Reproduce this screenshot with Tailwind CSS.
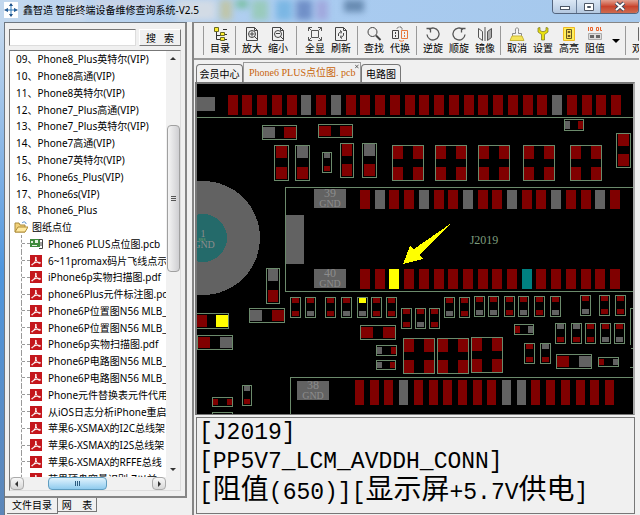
<!DOCTYPE html>
<html lang="zh-CN">
<head>
  <meta charset="UTF-8">
  <meta name="viewport" content="width=device-width, initial-scale=1.0">
  <title>鑫智造 智能终端设备维修查询系统-V2.5</title>
  <script src="https://cdn.jsdelivr.net/npm/@tailwindcss/browser@4"></script>
</head>
<body class="h-screen overflow-hidden flex flex-col bg-[#f0f0f0] text-black text-[10px] font-['Noto_Sans','Noto_Sans_CJK_SC',sans-serif]">

  <!-- Title bar -->
  <header class="relative h-[22px] shrink-0 flex items-start overflow-hidden bg-gradient-to-r from-[#c3d8ee] via-[#a9cbf0] to-[#a5c8ec]">
    <div class="absolute inset-0 flex items-start pl-[68px] blur-[3px] opacity-60">
      <span class="w-4 h-5 mr-3 bg-[#dfe3ea]"></span>
      <span class="w-16 h-2 mr-4 bg-[#d9d3df]"></span>
      <span class="w-10 h-5 mr-1 bg-[#e8e3df]"></span>
      <span class="w-3 h-5 mr-1 bg-[#c9c07c]"></span>
      <span class="w-3 h-2 mr-1 bg-[#58b870]"></span>
      <span class="w-4 h-5 mr-2 bg-[#8cc99a]"></span>
      <span class="w-4 h-5 mr-1 bg-[#5ba9dc]"></span>
      <span class="w-4 h-5 mr-1 bg-[#4a68ae]"></span>
      <span class="w-3 h-5 mr-4 bg-[#9c92d2]"></span>
      <span class="w-5 h-3 bg-[#3c6088]"></span>
    </div>
    <div class="relative flex items-center gap-[5px] pl-1 pt-[2px]">
      <svg class="w-[14px] h-4" viewBox="0 0 14 16">
        <rect width="14" height="16" fill="#fff"/>
        <path d="M7 1l2 3H5zM7 15l2-3H5zM0 8l4-2v4zM14 8l-4-2v4z" fill="#17477f"/>
        <path d="M7 3v10M2 8h10" stroke="#2f79b9"/>
      </svg>
      <h1 class="text-[10px] leading-4 whitespace-nowrap">鑫智造 智能终端设备维修查询系统-V2.5</h1>
    </div>
    <div class="relative ml-auto mr-px flex h-[14px] rounded-b border border-t-0 border-[#54657e] overflow-hidden">
      <button aria-label="最小化" class="w-6 flex justify-center items-center border-r border-[#6b7f9b] bg-gradient-to-b from-[#dbe7f5] to-[#b4c8e0]">
        <svg class="w-3 h-3" viewBox="0 0 12 12"><rect x="1.500" y="5.500" width="9" height="3" fill="#fff" stroke="#4d5665"/></svg>
      </button>
      <button aria-label="最大化" class="w-6 flex justify-center items-center border-r border-[#6b7f9b] bg-gradient-to-b from-[#dbe7f5] to-[#b4c8e0]">
        <svg class="w-3 h-3" viewBox="0 0 12 12"><path d="M1.500 2.500h9v7h-9zM4.500 5.500h3v1h-3z" fill="#fff" stroke="#4d5665"/></svg>
      </button>
      <button aria-label="关闭" class="w-[37px] flex justify-center items-center bg-gradient-to-b from-[#e0a090] via-[#c8432c] to-[#cd6a50]">
        <svg class="w-3 h-3" viewBox="0 0 12 12"><path d="M2 2l8 7M10 2L2 9" stroke="#444b5c" stroke-width="4"/><path d="M2 2l8 7M10 2L2 9" stroke="#fff" stroke-width="2"/></svg>
      </button>
    </div>
  </header>

  <main class="flex-1 min-h-0 flex">
    <div class="w-1 shrink-0 bg-gradient-to-b from-[#c5d9ee] via-[#4f96dd] to-[#5c86b8]"></div>

    <!-- Left panel: file tree -->
    <aside class="w-[183px] shrink-0 flex flex-col border-l border-t border-[#6e7780]">
      <div class="flex-1 min-h-0 flex flex-col gap-1 pl-1 pr-1 pt-[6px] pb-[5px] border-r-2 border-b-2 border-[#868686]">
        <form class="flex gap-[3px]">
          <input type="text" aria-label="搜索" class="flex-1 min-w-0 h-[17px] bg-white border border-[#777] border-r-[#ddd] border-b-[#ddd] px-1 outline-none">
          <button type="button" class="w-[42px] h-[17px] bg-[#f0f0f0] border border-white border-r-[#777] border-b-[#777] text-[10px] leading-[14px] whitespace-pre">搜   索</button>
        </form>

        <div class="flex-1 min-h-0 flex flex-col bg-white border border-[#777] border-r-[#ddd] border-b-[#ddd]">
          <div class="flex-1 min-h-0 flex">
            <div class="flex-1 min-w-0 overflow-hidden">
              <ul id="tree" class="h-[436px] grid auto-rows-fr whitespace-nowrap leading-4"></ul>
            </div>
            <div class="w-[14px] flex flex-col items-center bg-[#f1f1f1]">
              <svg class="w-2 h-4 mt-px" viewBox="0 0 8 16"><path d="M1 8l3-3 3 3z" fill="#333"/></svg>
              <div class="mt-[57px] h-[147px] w-[13px] flex flex-col justify-center items-center gap-px rounded-sm border border-[#a0a0a0] bg-gradient-to-r from-[#f4f4f4] to-[#cfcfd2]">
                <i class="w-[5px] h-px bg-[#555]"></i>
                <i class="w-[5px] h-px bg-[#555]"></i>
                <i class="w-[5px] h-px bg-[#555]"></i>
              </div>
              <svg class="w-2 h-4 mt-auto" viewBox="0 0 8 16"><path d="M1 7l3 3 3-3z" fill="#333"/></svg>
            </div>
          </div>
          <div class="h-[13px] shrink-0 flex bg-[#f1f1f1] pr-[14px]">
            <button aria-label="向左" class="w-[14px] flex justify-center items-center rounded-sm border border-[#aaa] bg-gradient-to-b from-[#f8f8f8] to-[#d8d8d8]">
              <svg class="w-2 h-2" viewBox="0 0 8 8"><path d="M5 1v6L2 4z" fill="#333"/></svg>
            </button>
            <div class="ml-6 w-[59px] flex justify-center items-center gap-px rounded-sm border border-[#5f9dc0] bg-gradient-to-b from-[#e0f3fd] to-[#8fcbee]">
              <i class="w-px h-[5px] bg-[#2d5c80]"></i>
              <i class="w-px h-[5px] bg-[#2d5c80]"></i>
              <i class="w-px h-[5px] bg-[#2d5c80]"></i>
            </div>
            <button aria-label="向右" class="ml-auto w-[14px] flex justify-center items-center rounded-sm border border-[#aaa] bg-gradient-to-b from-[#f8f8f8] to-[#d8d8d8]">
              <svg class="w-2 h-2" viewBox="0 0 8 8"><path d="M3 1v6l3-3z" fill="#333"/></svg>
            </button>
          </div>
        </div>
      </div>
      <nav class="h-[17px] shrink-0 flex items-start pl-[2px]">
        <button class="h-4 w-[51px] border-r border-b border-[#777]">文件目录</button>
        <button class="h-[14px] w-[39px] border-r border-b border-[#777] leading-3 whitespace-pre">网    表</button>
      </nav>
    </aside>

    <!-- Right panel -->
    <section class="flex-1 min-w-0 ml-[5px] mr-px flex flex-col border-l-2 border-t border-[#868686]">
      <div class="h-[37px] shrink-0 flex items-center overflow-hidden pl-[9px] border-b-2 border-[#999] leading-3 whitespace-nowrap">
        <div class="h-[29px] shrink-0 flex border-l border-[#999] pl-[3px] pr-[2px]">
          <button class="w-[26px] flex flex-col items-center">
            <svg class="size-4" viewBox="0 0 16 16" fill="none"><path d="M4.500 5v8.500M4.500 9.500h5M4.500 13.500h5M11 3.500h4M11 8.500h4M11 13.500h4" stroke="#333"/><path d="M2.500 1.500h4v4h-4zM8.500 6.500h4v3h-4zM8.500 11.500h4v3h-4z" fill="#ffee30" stroke="#6a6a20"/></svg>
            <span>目录</span>
          </button>
        </div>
        <div class="h-[29px] shrink-0 flex border-l border-[#999] pl-[3px] pr-[5px]">
          <button class="w-[26px] flex flex-col items-center">
            <svg class="size-4" viewBox="0 0 16 16" fill="none" stroke="#444"><path d="M2.500 1.500h8l3 3v10h-11zM10.500 1.500v3h3M10 10l3 3M5.500 8h5M8 5.500v5"/><circle cx="8" cy="8" r="3.500"/></svg>
            <span>放大</span>
          </button>
          <button class="w-[26px] flex flex-col items-center">
            <svg class="size-4" viewBox="0 0 16 16" fill="none" stroke="#444"><path d="M2.500 1.500h8l3 3v10h-11zM10.500 1.500v3h3M10 10l3 3M6 7.500h4"/><circle cx="8" cy="8" r="3.500"/></svg>
            <span>缩小</span>
          </button>
        </div>
        <div class="h-[29px] shrink-0 flex border-l border-[#999] pl-[5px] pr-[3px]">
          <button class="w-[26px] flex flex-col items-center">
            <svg class="size-4" viewBox="0 0 16 16" fill="none" stroke="#555"><path d="M4.500 4.500h7v7h-7zM1.500 5V1.500H5M11 1.500h3.500V5M14.500 11v3.500H11M5 14.500H1.500V11M2 2l2 2M14 2l-2 2M14 14l-2-2M2 14l2-2"/></svg>
            <span>全显</span>
          </button>
          <button class="w-[26px] flex flex-col items-center">
            <svg class="size-4" viewBox="0 0 16 16" fill="none" stroke="#444"><path d="M2.500 1.500h8l3 3v10h-11zM10.500 1.500v3h3M5.500 10V7.500L8 5.500M7 4.500l1.500 1-.5 2M10.500 7v2.500L8 11.500M9 12.500l-1.500-1 .5-2"/></svg>
            <span>刷新</span>
          </button>
        </div>
        <div class="h-[29px] shrink-0 flex border-l border-[#999] pl-[3px] pr-[3px]">
          <button class="w-[26px] flex flex-col items-center">
            <svg class="size-4" viewBox="0 0 16 16" fill="none" stroke="#444"><circle cx="6.500" cy="6" r="4.500"/><path d="M10 9.500l4.500 4.500" stroke-width="2"/></svg>
            <span>查找</span>
          </button>
          <button class="w-[26px] flex flex-col items-center">
            <svg class="size-4" viewBox="0 0 16 16" fill="none"><path d="M.5 4.500h6v8h-6zM3.500 6v2M3.500 9v2" stroke="#444"/><path d="M9.500 4.500h6v8h-6zM12.500 6v2M12.500 9v2M12 14.500c-2 1-4 1-5-.5" stroke="#e8783c"/><path d="M5 2.500c1-2 4-2 5-.5v1.500" stroke="#444" stroke-dasharray="2 1"/></svg>
            <span>代换</span>
          </button>
        </div>
        <div class="h-[29px] shrink-0 flex border-l border-[#999] pl-[3px] pr-[2px]">
          <button class="w-[26px] flex flex-col items-center">
            <svg class="size-4" viewBox="0 0 16 16" fill="none" stroke="#555"><path d="M4 3.500a6 6 0 1 1-2 5M1.500 2.500h4v4" stroke-width="1.300"/></svg>
            <span>逆旋</span>
          </button>
          <button class="w-[26px] flex flex-col items-center">
            <svg class="size-4" viewBox="0 0 16 16" fill="none" stroke="#555"><path d="M12 3.500a6 6 0 1 0 2 5M14.500 2.500h-4v4" stroke-width="1.300"/></svg>
            <span>顺旋</span>
          </button>
          <button class="w-[26px] flex flex-col items-center">
            <svg class="size-4" viewBox="0 0 16 16" fill="none" stroke="#555"><path d="M1.500 2.500l4 3v9l-4-3zM8 1v14"/><path d="M14.500 2.500l-4 3v9l4-3z" fill="#aaa"/></svg>
            <span>镜像</span>
          </button>
        </div>
        <div class="h-[29px] shrink-0 flex border-l border-[#999] pl-[3px] pr-[2px]">
          <button class="w-[26px] flex flex-col items-center">
            <svg class="size-4" viewBox="0 0 16 16"><path d="M6.500 5.500c-1-5 4-5 3 0v2h3v3h-9v-3h3z" fill="#f4f4f4" stroke="#888"/><path d="M3 10h10l2 4.500H1z" fill="#f4e458" stroke="#c9b63a"/></svg>
            <span>取消</span>
          </button>
          <button class="w-[26px] flex flex-col items-center">
            <svg class="size-4" viewBox="0 0 16 16"><path d="M3 2l2-.5v3l2 1h2l2-1v-3l2 .5v4L9.500 8.500V14h-3V8.500L3 6z" fill="#e8e010" stroke="#77721c" stroke-width=".7"/></svg>
            <span>设置</span>
          </button>
          <button class="w-[26px] flex flex-col items-center">
            <svg class="size-4" viewBox="0 0 16 16"><path d="M2.500 1.500h11v13h-11z" fill="#fff05a" stroke="#f0b822"/><path d="M5.500 3.500h5v9h-5zM7 5.500h2v1H7zM7 9.500h2v1H7z" fill="#ffe05a" stroke="#6a5a20"/></svg>
            <span>高亮</span>
          </button>
          <button class="w-[26px] flex flex-col items-center">
            <svg class="size-4" viewBox="0 0 16 16" fill="none"><path d="M1.500 1v4M3.500 1.500h2v3h-2zM9.500 1.500h2v3h-2zM13.500 1v3.500H15" stroke="#e8642c"/><path d="M1.500 7.500h13v6h-13z" stroke="#aaa" fill="#ddd"/><path d="M3 9h4v3H3zM9 9h4v3H9z" fill="#666"/></svg>
            <span>阻值</span>
          </button>
          <button aria-label="更多" class="w-[15px] flex items-center justify-center">
            <svg class="w-2 h-2" viewBox="0 0 8 8"><path d="M0 2h8L4 6z" fill="#000"/></svg>
          </button>
        </div>
        <div class="h-[29px] shrink-0 flex border-l border-[#999] pl-[3px]">
          <button class="w-[26px] flex flex-col items-center">
            <svg class="size-4" viewBox="0 0 16 16"><path d="M4.500 1.500h10v13h-10z" fill="#ddd" stroke="#666"/></svg>
            <span>双图</span>
          </button>
        </div>
      </div>

      <nav class="h-[22px] shrink-0 flex items-end pl-[2px]">
        <button class="h-[18px] w-[47px] border border-b-0 border-[#777] rounded-t-sm leading-4 whitespace-nowrap">会员中心</button>
        <button class="h-5 w-[118px] flex justify-between border border-b-0 border-[#999] pl-[5px] pr-px leading-[19px] text-[#c8640a] font-['Liberation_Serif','Noto_Sans_CJK_SC',serif] whitespace-nowrap">
          <span>Phone6 PLUS点位图. pcb</span>
          <svg class="w-[5px] h-[5px] mt-px" viewBox="0 0 5 5"><path d="M0 0l5 5M5 0L0 5" stroke="#333"/></svg>
        </button>
        <button class="h-[18px] w-10 border border-b-0 border-[#777] rounded-t-sm leading-4 whitespace-nowrap">电路图</button>
      </nav>

      <!-- Board view -->
      <div class="flex-1 min-h-0 ml-px mr-1 border-t-2 border-l-2 border-r-2 border-b border-[#777] border-r-[#aaa] bg-black">
        <svg id="board" class="block w-full h-full" viewBox="197 84 436 330" preserveAspectRatio="xMinYMin slice" shape-rendering="crispEdges"></svg>
      </div>

      <!-- Readout for the selected pad -->
      <div class="h-[97px] shrink-0 mt-[2px] ml-[2px] mr-1 mb-px border border-[#777] pl-[2px] pt-px text-[23px] leading-[29px] whitespace-nowrap overflow-hidden font-['Liberation_Mono','Noto_Sans_CJK_SC',monospace]">
        <p>[J2019]</p>
        <p>[PP5V7_LCM_AVDDH_CONN]</p>
        <p class="flex items-baseline">[<span class="text-[28px]">阻值</span>(650)][<span class="text-[28px]">显示屏</span>+5.7V<span class="text-[28px]">供电</span>]</p>
      </div>
    </section>
  </main>

  <script>
    // ---- file tree ----
    const phones = ['09、Phone8_Plus英特尔(VIP)', '10、Phone8高通(VIP)', '11、Phone8英特尔(VIP)', '12、Phone7_Plus高通(VIP)',
      '13、Phone7_Plus英特尔(VIP)', '14、Phone7高通(VIP)', '15、Phone7英特尔(VIP)', '16、Phone6s_Plus(VIP)', '17、Phone6s(VIP)', '18、Phone6_Plus'];
    const files = ['Phone6 PLUS点位图.pcb', '6~11promax码片飞线点示', 'iPhone6p实物扫描图.pdf', 'phone6Plus元件标注图.pdf',
      'Phone6P位置图N56 MLB_', 'Phone6P位置图N56 MLB_', 'Phone6p实物扫描图.pdf', 'Phone6P电路图N56 MLB_',
      'Phone6P电路图N56 MLB_', 'Phone元件替换表元件代用', '从iOS日志分析iPhone重启', '苹果6-XSMAX的I2C总线架',
      '苹果6-XSMAX的I2S总线架', '苹果6-XSMAX的RFFE总线', '苹果硬盘容量识别-7以前'];

    const folderIcon = '<svg class="w-[14px] h-3 shrink-0" viewBox="0 0 14 12"><path d="M1 11V2h4l1 2h5v7z" fill="#f3d27a" stroke="#a98a3c"/><path d="M1 11l3-5h10l-3 5z" fill="#ffe9a0" stroke="#b08e3a"/><path d="M8 2c2-2 4-1 4 1" fill="none" stroke="#4a84c4"/></svg>';
    const pcbIcon = '<svg class="w-[14px] h-[13px] shrink-0" viewBox="0 0 14 13"><path d="M0 2h10v8H0z" fill="#3f8a3c"/><path d="M1 4h2v2H1zM5 3h3v3H5zM2 8h5v1H2z" fill="#e4f0e0"/><path d="M9 2.500h3.500v9H9M11 5v4" fill="none" stroke="#444"/></svg>';
    const pdfIcon = '<svg class="w-3 h-3 shrink-0" viewBox="0 0 12 12"><path d="M0 0h12v12H0z" fill="#c4161c"/><path d="M6 2c-1 0 0 3 1 4.500S10 9 10.500 8 5 7 3 8.500 1.500 10.500 3 9.500 6.500 4 6 2z" fill="none" stroke="#fff"/></svg>';

    document.getElementById('tree').innerHTML =
      phones.map(t => `<li class="flex items-center pl-[6px]">${t}</li>`).join('') +
      `<li class="flex items-center gap-1 pl-1">${folderIcon}图纸点位</li>` +
      files.map((t, i) => `<li class="flex items-center ml-[11px] border-l border-dashed border-[#999]">
        <i class="w-2 shrink-0 border-t border-dashed border-[#999]"></i>
        <span class="w-[18px] shrink-0 flex">${i ? pdfIcon : pcbIcon}</span>${t}</li>`).join('');

    // ---- board ----
    const fills = { r: '#800000', g: '#626262', y: '#ffff00', t: '#008080' };
    const line = '#6b8a6b';
    const out = [];
    const rect = (x, y, w, h, c) => out.push(`<rect x="${x}" y="${y}" width="${w}" height="${h}" fill="${fills[c]}"/>`);
    const box = (x, y, w, h) => out.push(`<rect x="${x + 0.5}" y="${y + 0.5}" width="${w - 1}" height="${h - 1}" fill="none" stroke="${line}"/>`);
    const path = d => out.push(`<path d="${d}" fill="none" stroke="${line}"/>`);
    const text = (x, y, s, size = 10, c = '#8c8c8c') => out.push(
      `<text x="${x}" y="${y}" font-size="${size}" fill="${c}" text-anchor="middle" font-family="Liberation Serif, serif">${s}</text>`);

    // connector row: one letter per pad
    const row = (x, y, w, h, pitch, pads) => [...pads].forEach((c, i) => rect(Math.round(x + i * pitch), y, w, h, c));
    // two-pad part, pads at the ends of the longer side
    const part = (x, y, w, h, c) => {
      const big = Math.max(w, h) > 30;
      const long = big ? 12 : 5;
      box(x, y, w, h);
      if (w > h) {
        rect(x + 1, y + 2, long, h - 4, c[0]);
        rect(x + w - long - 1, y + 2, long, h - 4, c[1]);
      } else {
        rect(x + 2, y + 1, w - 4, long, c[0]);
        rect(x + 2, y + h - long - 2, w - 4, long, c[1]);
      }
    };
    const quad = (x, y) => {
      box(x, y, 32, 36);
      [[1, 1], [21, 1], [1, 22], [21, 22]].forEach(([dx, dy]) => rect(x + dx, y + dy, 10, 13, 'r'));
    };

    // mounting hole
    out.push('<circle cx="203" cy="238" r="57" fill="#626262"/><circle cx="203" cy="238" r="24" fill="#246a6a"/>');
    text(203, 237, '1');
    text(204, 248, 'GND');
    text(202, 241, 'sss', 6, '#6b9a6b');

    // connectors
    rect(197, 97, 18, 14, 'g');
    row(227.5, 95, 10, 20, 14.75, 'rrrrrgrgrrrrrrrrrrrrrrgrrrr');
    path('M197 117.500H633');
    path('M633 187.500H285.500V291.500H633');
    row(360, 190, 10, 19, 14.7, 'rgrrgrrgrrgrrgrrgr');
    row(360, 269, 10, 20, 14.7, 'rryrrrrrrrrtrrrrrr');
    rect(286, 215, 18, 49, 'g');
    path('M633 377.500H290.500V414');
    row(355, 380, 9, 25, 14.7, 'rrrgrrrrrrggrrrrrr');
    [[314, 189, '39'], [314, 269, '40'], [297, 381, '38']].forEach(([x, y, n]) => {
      rect(x, y, 32, 19, 'g');
      text(x + 16, y + 8, n, 12);
      text(x + 16, y + 18, 'GND');
    });

    [[262, 125, 35, 15, 'gr'], [318, 124, 35, 14, 'rr'], [274, 145, 15, 36, 'rr'], [295, 145, 15, 36, 'gr'], [322, 152, 10, 21, 'gr'],
     [340, 143, 14, 35, 'rr'], [362, 143, 15, 35, 'gr'], [564, 119, 20, 12, 'gr'], [616, 133, 15, 35, 'rr'],
     [266, 268, 14, 36, 'gr'], [249, 308, 36, 15, 'gr'], [194, 313, 35, 16, 'ry'], [197, 335, 36, 15, 'rg'],
     [360, 325, 36, 15, 'rr'], [376, 345, 21, 11, 'gr'], [376, 360, 20, 10, 'gr'], [242, 385, 10, 21, 'gr'],
     [212, 397, 21, 10, 'rr'], [212, 412, 21, 10, 'rr'], [514, 324, 20, 11, 'rg'], [556, 354, 36, 15, 'rg'], [598, 357, 21, 10, 'rg']
    ].forEach(p => part(...p));

    // small vertical capacitors and resistors
    [[290, 297, 'rr'], [305, 297, 'rg'], [325, 297, 'rr'], [341, 297, 'rg'], [357, 297, 'yg'], [371, 297, 'rr'], [386, 297, 'rr'],
     [401, 308, 'rr'], [415, 308, 'rg'], [429, 308, 'rr'], [444, 297, 'rg'], [459, 297, 'rr'], [474, 296, 'rg'], [488, 296, 'rg'],
     [504, 296, 'rr'], [518, 296, 'rg'], [534, 296, 'rr'], [550, 296, 'rg'], [580, 295, 'rg'], [599, 295, 'rr'], [615, 295, 'rr'],
     [555, 323, 'gr'], [571, 323, 'gr'], [585, 323, 'rr'], [600, 323, 'rg'], [614, 323, 'rg'], [524, 343, 'rr'], [540, 343, 'gr']
    ].forEach(([x, y, c]) => part(x, y, 11, 21, c));
    path('M633 308.500H630.500V345M633 348.500H630.500M630 367.500H633');

    [[392, 145], [435, 145], [478, 145], [523, 145], [570, 145], [403, 338], [437, 338], [471, 337]].forEach(q => quad(...q));

    text(484, 244, 'J2019', 12, '#7d9c7d');
    out.push('<path d="M403 264l7-18 4 3 36-25-31 31 4 4z" fill="#ffff00"/>');
    document.getElementById('board').innerHTML = out.join('');
  </script>
</body>
</html>
